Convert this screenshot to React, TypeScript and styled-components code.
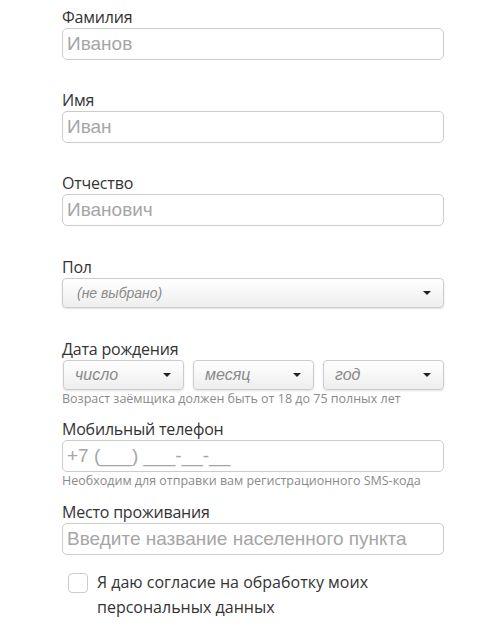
import React from "react";
import styled, { createGlobalStyle } from "styled-components";

const GlobalStyle = createGlobalStyle`
  html, body {
    margin: 0;
    padding: 0;
    background: #ffffff;
  }
`;

const Form = styled.form`
  width: 382px;
  padding: 7px 0 0 62px;
  font-family: "Open Sans", "Liberation Sans", sans-serif;
`;

const Field = styled.div<{ $pb: number }>`
  display: flex;
  flex-direction: column;
  padding-bottom: ${(p) => p.$pb}px;
`;

const Label = styled.div`
  font-size: 16px;
  line-height: 20px;
  color: #333333;
  margin-bottom: 1px;
  letter-spacing: -0.2px;
`;

const Input = styled.input`
  box-sizing: border-box;
  width: 382px;
  height: 32px;
  border: 1px solid #cccccc;
  border-radius: 5px;
  padding: 0 4px;
  font-family: "Liberation Sans", Arial, sans-serif;
  font-size: 19px;
  color: #333333;
  outline: none;
  &::placeholder {
    color: #a6a6a6;
  }
`;

const Select = styled.div<{ $w?: number; $fs?: number }>`
  box-sizing: border-box;
  width: ${(p) => (p.$w ? `${p.$w}px` : "100%")};
  height: 30px;
  border: 1px solid #cccccc;
  border-radius: 4px;
  background: linear-gradient(#ffffff, #eeeeee);
  box-shadow: 0 1px 2px rgba(0, 0, 0, 0.12);
  display: flex;
  align-items: center;
  justify-content: space-between;
  padding: 0 12px 0 14px;
  font-family: "Liberation Sans", Arial, sans-serif;
  font-style: italic;
  font-size: ${(p) => p.$fs ?? 14}px;
  color: #8a8a8a;
`;

const Arrow = styled.span`
  width: 0;
  height: 0;
  border-left: 4px solid transparent;
  border-right: 4px solid transparent;
  border-top: 4px solid #222222;
`;

const DateRow = styled.div`
  display: flex;
  gap: 9px;
  padding-left: 1px;
`;

const DateSelect = styled(Select)`
  padding-left: 11px;
`;

const Hint = styled.div`
  font-size: 12.5px;
  line-height: 16px;
  color: #8a8a8a;
  margin-top: 1px;
`;

const Agree = styled.label`
  display: flex;
  align-items: flex-start;
  gap: 9px;
  padding: 15px 0 0 6px;
  font-size: 16px;
  line-height: 25px;
  color: #333333;
`;

const Box = styled.span`
  flex: none;
  box-sizing: border-box;
  width: 20px;
  height: 20px;
  margin-top: 3px;
  border: 1px solid #cccccc;
  border-radius: 4px;
  background: #ffffff;
`;

export default function App() {
  return (
    <>
      <GlobalStyle />
      <Form>
        <Field $pb={30}>
          <Label>Фамилия</Label>
          <Input placeholder="Иванов" />
        </Field>
        <Field $pb={30}>
          <Label>Имя</Label>
          <Input placeholder="Иван" />
        </Field>
        <Field $pb={31}>
          <Label>Отчество</Label>
          <Input placeholder="Иванович" />
        </Field>
        <Field $pb={31}>
          <Label>Пол</Label>
          <Select>
            <span>(не выбрано)</span>
            <Arrow />
          </Select>
        </Field>
        <Field $pb={12}>
          <Label>Дата рождения</Label>
          <DateRow>
            <DateSelect $w={121} $fs={16}>
              <span>число</span>
              <Arrow />
            </DateSelect>
            <DateSelect $w={121} $fs={16}>
              <span>месяц</span>
              <Arrow />
            </DateSelect>
            <DateSelect $w={121} $fs={16}>
              <span>год</span>
              <Arrow />
            </DateSelect>
          </DateRow>
          <Hint>Возраст заёмщика должен быть от 18 до 75 полных лет</Hint>
        </Field>
        <Field $pb={13}>
          <Label>Мобильный телефон</Label>
          <Input placeholder="+7 (___) ___-__-__" />
          <Hint>Необходим для отправки вам регистрационного SMS-кода</Hint>
        </Field>
        <Field $pb={0}>
          <Label>Место проживания</Label>
          <Input placeholder="Введите название населенного пункта" />
        </Field>
        <Agree>
          <Box />
          <span>
            Я даю согласие на обработку моих
            <br />
            персональных данных
          </span>
        </Agree>
      </Form>
    </>
  );
}
